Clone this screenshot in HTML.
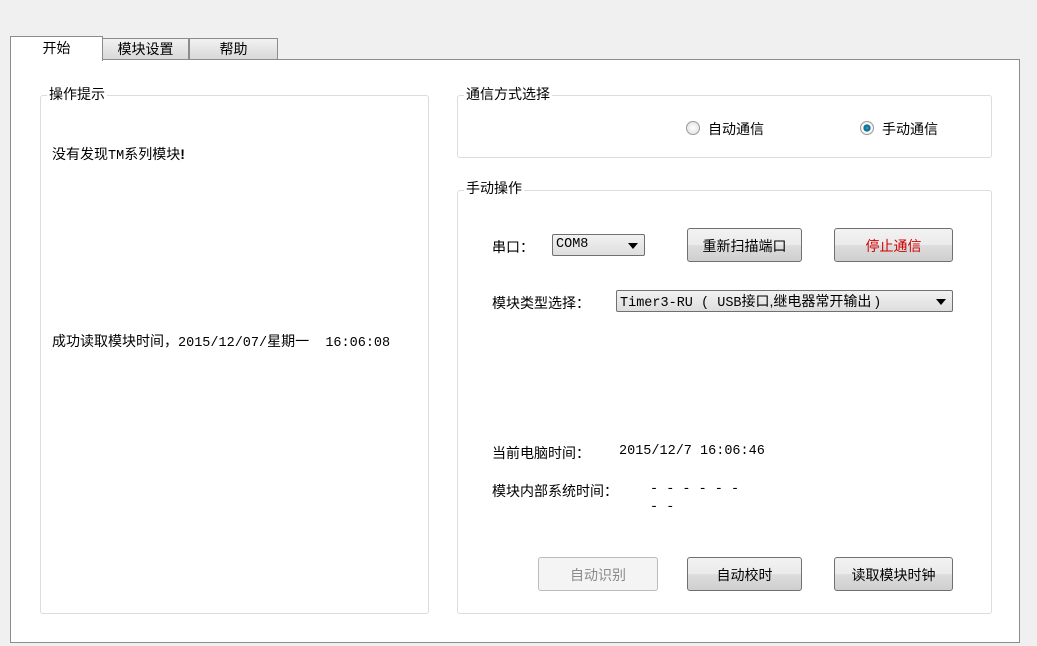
<!DOCTYPE html>
<html><head><meta charset="utf-8"><style>
body{margin:0;width:1037px;height:646px;background:#f0f0f0;position:relative;overflow:hidden;font-family:"Liberation Sans","Noto Sans CJK SC",sans-serif;font-size:14px;color:#000}
.a{position:absolute}
.m{font-family:"Liberation Mono","Noto Sans CJK SC",monospace;font-size:13.5px}
.panel{left:10px;top:59px;width:1008px;height:582px;background:#fff;border:1px solid #8c8c8c}
.tab{height:20px;border:1px solid #8c8c8c;border-bottom:none;background:linear-gradient(#f2f2f2,#d8d8d8);text-align:center;line-height:20px}
.grp{border:1px solid #dcdcdc;border-radius:3px}
.lbl{background:#fff;padding:0 2px;line-height:16px}
.btn{height:34px;border:1px solid #707070;border-radius:3px;background:linear-gradient(#f2f2f2 0%,#ebebeb 50%,#dddddd 51%,#cfcfcf 100%);text-align:center;line-height:34px;box-sizing:border-box}
.dis{border-color:#bcbcbc;background:#f4f4f4;color:#8a8a8a}
.cb{height:22px;border:1px solid #707070;border-radius:2px;background:linear-gradient(#f2f2f2,#dedede);box-sizing:border-box;line-height:20px;padding-left:3px}
.arr{position:absolute;right:6px;top:8px;width:0;height:0;border-left:5px solid transparent;border-right:5px solid transparent;border-top:6px solid #000}
.rad{width:12px;height:12px;border-radius:50%;border:1px solid #9a9a9a;background:radial-gradient(#fff,#ddd)}
</style></head><body>
<div class="a panel"></div>
<div class="a tab" style="left:102px;top:38px;width:85px">模块设置</div>
<div class="a tab" style="left:189px;top:38px;width:87px">帮助</div>
<div class="a" style="left:10px;top:36px;width:91px;height:24px;background:#fff;border:1px solid #8c8c8c;border-bottom:none;text-align:center;line-height:22px">开始</div>

<div class="a grp" style="left:40px;top:95px;width:387px;height:517px"></div>
<div class="a lbl" style="left:47px;top:86px">操作提示</div>
<div class="a" style="left:52px;top:144px">没有发现<span class="m">TM</span>系列模块<b>!</b></div>
<div class="a" style="left:52px;top:331px">成功读取模块时间，<span class="m">2015/12/07/</span>星期一<span class="m">&nbsp;&nbsp;16:06:08</span></div>

<div class="a grp" style="left:457px;top:95px;width:533px;height:61px"></div>
<div class="a lbl" style="left:464px;top:86px">通信方式选择</div>
<div class="a rad" style="left:686px;top:121px"></div>
<div class="a" style="left:708px;top:119px">自动通信</div>
<div class="a rad" style="left:860px;top:121px;background:radial-gradient(#2aa0c8 0,#0b5f86 40%,#fff 45%,#ddd 100%)"></div>
<div class="a" style="left:882px;top:119px">手动通信</div>

<div class="a grp" style="left:457px;top:190px;width:533px;height:422px"></div>
<div class="a lbl" style="left:464px;top:180px">手动操作</div>
<div class="a" style="left:492px;top:237px">串口：</div>
<div class="a cb m" style="left:552px;top:234px;width:93px">COM8<span class="arr"></span></div>
<div class="a btn" style="left:687px;top:228px;width:115px">重新扫描端口</div>
<div class="a btn" style="left:834px;top:228px;width:119px;color:#d00000">停止通信</div>
<div class="a" style="left:492px;top:293px">模块类型选择：</div>
<div class="a cb" style="left:616px;top:290px;width:337px"><span class="m">Timer3-RU ( USB</span>接口,继电器常开输出 )<span class="arr"></span></div>
<div class="a" style="left:492px;top:443px">当前电脑时间：</div>
<div class="a m" style="left:619px;top:444px">2015/12/7 16:06:46</div>
<div class="a" style="left:492px;top:481px">模块内部系统时间：</div>
<div class="a m" style="left:650px;top:482px">- - - - - -</div>
<div class="a m" style="left:650px;top:500px">- -</div>
<div class="a btn dis" style="left:538px;top:557px;width:120px">自动识别</div>
<div class="a btn" style="left:687px;top:557px;width:115px">自动校时</div>
<div class="a btn" style="left:834px;top:557px;width:119px">读取模块时钟</div>
</body></html>
